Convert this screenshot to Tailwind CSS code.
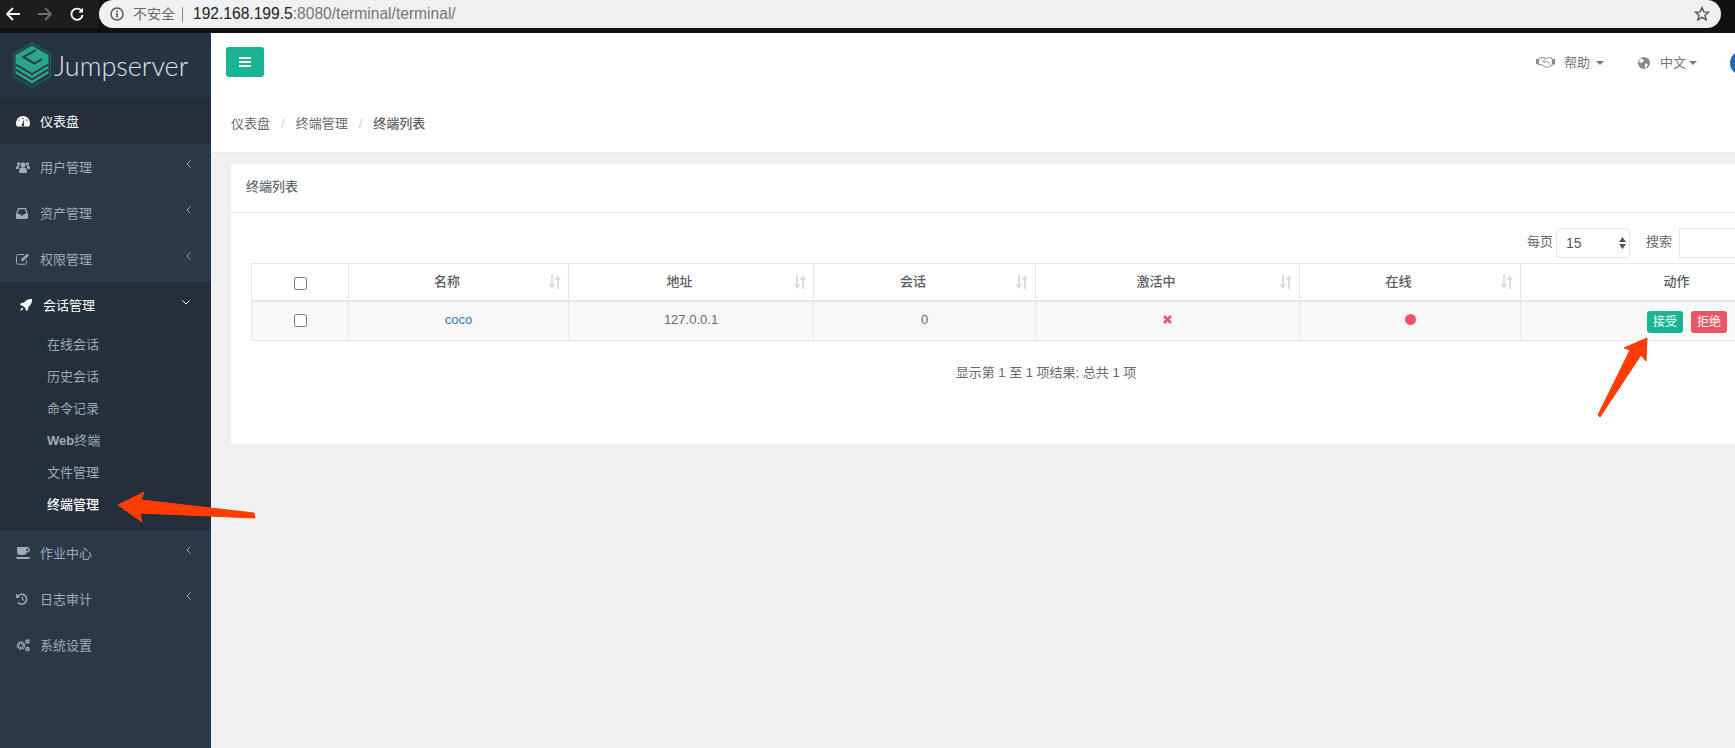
<!DOCTYPE html>
<html>

<head>
    <meta charset="UTF-8">
    <title>Jumpserver</title>
    <script src="https://cdn.jsdelivr.net/npm/@tailwindcss/browser@4"></script>
</head>

<body class="bg-[#f0f0f0] font-['Liberation_Sans','Noto_Sans_CJK_SC',sans-serif] text-[13px] text-[#676a6c]">
    <div class="relative w-[1735px] h-[748px] overflow-hidden flex flex-col">

        <!-- Browser bar -->
        <div class="h-[33px] shrink-0 bg-[#111] flex items-start">
            <div class="w-[99px] h-[28px] shrink-0 bg-[#1d1d1d] flex items-center gap-[18px] pl-[6px]">
                <svg class="w-[14px] h-[14px]" viewBox="0 0 14 14" fill="none" stroke="#fff" stroke-width="1.8"><path d="M14 7H1.500M7 1 1 7l6 6" /></svg>
                <svg class="w-[14px] h-[14px]" viewBox="0 0 14 14" fill="none" stroke="#6e6e6e" stroke-width="1.8"><path d="M0 7h12.500M7 1l6 6-6 6" /></svg>
                <svg class="w-[14px] h-[14px]" viewBox="0 0 14 14" fill="none" stroke="#fff" stroke-width="1.8"><path d="M12 4.500A5.600 5.600 0 1 0 12.600 8" /><path d="M13 .8v4.600H8.400" fill="#fff" stroke="none" /></svg>
            </div>
            <div class="w-[1622px] h-[28px] bg-[#eff0f2] rounded-r-[14px] rounded-l-[14px] flex items-center pl-[11px] pr-[11px]">
                <svg class="w-[14px] h-[14px] shrink-0" viewBox="0 0 14 14" fill="none" stroke="#555"><circle cx="7" cy="7" r="6" stroke-width="1.4" /><path d="M7 6v4.400M7 3.400v1.500" stroke-width="1.6" /></svg>
                <span class="ml-[9px] text-[14px] text-[#6a6a6a]">不安全</span>
                <span class="ml-[7px] w-px h-[15px] bg-[#888]"></span>
                <span class="ml-[10px] text-[15.6px] text-[#222]">192.168.199.5<span class="text-[#777]">:8080/terminal/terminal/</span></span>
                <svg class="ml-auto w-[16px] h-[16px]" viewBox="0 0 16 16" fill="none" stroke="#555" stroke-width="1.4"><path d="m8 1.600 1.900 4.300 4.600.4-3.500 3 1.100 4.600L8 11.400l-4.100 2.500L5 9.300l-3.500-3 4.600-.4z" /></svg>
            </div>
        </div>

        <div class="flex flex-1 min-h-0">

            <!-- Sidebar -->
            <div class="w-[211px] shrink-0 bg-[#2a3848] text-[#a0aaba]">
                <div class="h-[65px] bg-[#253343] flex items-center pl-[13px]">
                    <svg class="w-[39px] h-[46px] shrink-0 -mt-[2px]" viewBox="0 0 39 46" fill="none">
                        <path d="M19 1 37.500 11.500v23L19 45 .8 34.500v-23z" stroke="#1b6a60" stroke-width="1.200" />
                        <path d="M19 3.500 35.500 13v18.500L19 41.500 2.500 31.500V13z" fill="#2aa585" />
                        <path d="M2.500 22.500 19 32l16.500-9.500M2.500 27.500 19 37.500l16.500-10" stroke="#24384a" stroke-width="1.700" />
                        <path d="M23 8 10.500 15 21.500 21.500 29 17" stroke="#24384a" stroke-width="2" />
                    </svg>
                    <span class="ml-[2px] font-['Lato',sans-serif] font-light text-[27px] leading-none text-[#dfe4ea]">Jumpserver</span>
                </div>

                <div class="h-[46px] bg-[#242f3b] flex items-center pl-[16px] text-white">
                    <svg class="w-[14px] h-[12px]" viewBox="0 0 14 12" fill="currentColor"><path fill-rule="evenodd" d="M7 1a7 7 0 0 1 7 7c0 1.300-.3 2.400-.9 3.400H.9A7 7 0 0 1 0 8a7 7 0 0 1 7-7zM7.600 3H6.400v1.200h1.200zM3.500 4.500H2.400v1.200h1.100zm8 0h-1.100v1.200h1.100zM7.500 5.600 6.300 8.700a1.300 1.300 0 1 0 1.300.1l.8-3z" /></svg>
                    <span class="ml-[10px] mt-[1px]">仪表盘</span>
                </div>

                <div class="h-[46px] flex items-center pl-[16px] pr-[20px]">
                    <svg class="w-[14px] h-[12px]" viewBox="0 0 14 12" fill="currentColor"><circle cx="7" cy="3.800" r="2.500" /><circle cx="2.600" cy="3" r="1.700" /><circle cx="11.400" cy="3" r="1.700" /><path d="M3.200 12V9.200c0-2 1.500-2.900 3.800-2.900s3.800.9 3.800 2.900V12zM0 8V6.500C0 5.400.8 5 2.600 5l.8.100A4 4 0 0 0 2.600 8zm14 0V6.500C14 5.400 13.200 5 11.400 5l-.8.100c.5.700.8 1.700.8 2.900z" /></svg>
                    <span class="ml-[10px] mt-[1px]">用户管理</span>
                    <svg class="ml-auto -mt-[6px] w-[5px] h-[8px]" viewBox="0 0 5 8" fill="none" stroke="currentColor"><path d="M4.500.5 1 4l3.500 3.500" /></svg>
                </div>

                <div class="h-[46px] flex items-center pl-[16px] pr-[20px]">
                    <svg class="w-[12px] h-[11px] mr-[2px]" viewBox="0 0 12 11" fill="currentColor"><path fill-rule="evenodd" d="M2 0h8l2 6v3.500c0 .8-.7 1.500-1.500 1.500h-9C.7 11 0 10.300 0 9.500V6zm.9 1.300L1.500 6h2.700l.8 1.600h2L7.800 6h2.700L9.100 1.300z" /></svg>
                    <span class="ml-[10px] mt-[1px]">资产管理</span>
                    <svg class="ml-auto -mt-[6px] w-[5px] h-[8px]" viewBox="0 0 5 8" fill="none" stroke="currentColor"><path d="M4.500.5 1 4l3.500 3.500" /></svg>
                </div>

                <div class="h-[46px] flex items-center pl-[16px] pr-[20px]">
                    <svg class="w-[14px] h-[12px]" viewBox="0 0 14 12" fill="none" stroke="currentColor"><path d="M10.500 7v2.500c0 1-.6 1.800-1.700 1.800H2.300c-1 0-1.800-.8-1.800-1.800V3.300c0-1 .8-1.800 1.800-1.800h6" /><path d="M5 8.300 5.500 6 11.200.7 13 2.500 7.300 7.800z" fill="currentColor" stroke="none" /></svg>
                    <span class="ml-[10px] mt-[1px]">权限管理</span>
                    <svg class="ml-auto -mt-[6px] w-[5px] h-[8px]" viewBox="0 0 5 8" fill="none" stroke="currentColor"><path d="M4.500.5 1 4l3.500 3.500" /></svg>
                </div>

                <!-- Active group -->
                <div class="h-[248px] bg-[#242f3b]">
                    <div class="h-[46px] flex items-center pl-[20px] pr-[21px] text-white">
                        <svg class="w-[12px] h-[12px] mr-[1px]" viewBox="0 0 12 12" fill="currentColor"><path d="M12 0c.2 3.300-1.100 6-3.500 7.800L8 11 6 12l-.4-2.400-3.200-3.200L0 6l1-2 3.200-.5C6 1 8.700-.2 12 0zM1.800 8.500l1.700 1.700L0 12z" /></svg>
                        <span class="ml-[10px] mt-[1px]">会话管理</span>
                        <svg class="ml-auto -mt-[6px] w-[8px] h-[5px]" viewBox="0 0 8 5" fill="none" stroke="currentColor"><path d="M.5.500 4 4 7.500.500" /></svg>
                    </div>
                    <div class="h-[32px] flex items-center pl-[47px] pt-[1px]">在线会话</div>
                    <div class="h-[32px] flex items-center pl-[47px] pt-[1px]">历史会话</div>
                    <div class="h-[32px] flex items-center pl-[47px] pt-[1px]">命令记录</div>
                    <div class="h-[32px] flex items-center pl-[47px] pt-[1px]"><span class="font-bold">Web</span>终端</div>
                    <div class="h-[32px] flex items-center pl-[47px] pt-[1px]">文件管理</div>
                    <div class="h-[32px] flex items-center pl-[47px] pt-[1px] text-white font-medium">终端管理</div>
                </div>

                <div class="h-[46px] flex items-center pl-[16px] pr-[20px]">
                    <svg class="w-[14px] h-[12px]" viewBox="0 0 14 12" fill="currentColor"><path fill-rule="evenodd" d="M1 0h10.200C12.800 0 14 1 14 2.700s-1.200 2.800-2.800 2.800h-.6c-.3 1.500-1.400 2.500-3 2.500H4c-1.700 0-3-1.300-3-3zm9.600 1.500v2.600h.5c.9 0 1.400-.5 1.400-1.300s-.5-1.300-1.400-1.300zM0 10h14c0 1-.8 2-2 2H2c-1.200 0-2-1-2-2z" /></svg>
                    <span class="ml-[10px] mt-[1px]">作业中心</span>
                    <svg class="ml-auto -mt-[6px] w-[5px] h-[8px]" viewBox="0 0 5 8" fill="none" stroke="currentColor"><path d="M4.500.5 1 4l3.500 3.500" /></svg>
                </div>

                <div class="h-[46px] flex items-center pl-[16px] pr-[20px]">
                    <svg class="w-[12px] h-[12px] mr-[1px]" viewBox="0 0 12 12" fill="none" stroke="currentColor" stroke-width="1.500"><path d="M1.800 3A5 5 0 1 1 2 9.500" /><path d="M6.500 3.500v3l2 1" stroke-width="1.200" /><path d="M0 .8 4.300 4.600 0 5z" fill="currentColor" stroke="none" /></svg>
                    <span class="ml-[11px] mt-[1px]">日志审计</span>
                    <svg class="ml-auto -mt-[6px] w-[5px] h-[8px]" viewBox="0 0 5 8" fill="none" stroke="currentColor"><path d="M4.500.5 1 4l3.500 3.500" /></svg>
                </div>

                <div class="h-[46px] flex items-center pl-[16px] pr-[20px]">
                    <svg class="w-[14px] h-[13px]" viewBox="0 0 14 13" fill="none" stroke="currentColor"><circle cx="5" cy="6.500" r="2.900" stroke-width="2.800" stroke-dasharray="1.600 .6" /><circle cx="11.500" cy="2.500" r="1.500" stroke-width="1.500" /><circle cx="11.500" cy="10" r="1.500" stroke-width="1.500" /></svg>
                    <span class="ml-[10px] mt-[1px]">系统设置</span>
                </div>
            </div>

            <!-- Main -->
            <div class="flex-1 min-w-0 overflow-hidden">

                <!-- Navbar -->
                <div class="h-[61px] bg-white border-b border-[#e7eaec] flex items-center pl-[15px] pr-[5px]">
                    <button class="w-[38px] h-[30px] bg-[#1ab394] rounded-[3px] flex items-center justify-center -mt-[2px]">
                        <svg class="w-[12px] h-[10px]" viewBox="0 0 12 10" fill="#fff"><path d="M0 0h12v2H0zM0 4h12v2H0zM0 8h12v2H0z" /></svg>
                    </button>
                    <svg class="ml-auto -mt-[2px] w-[19px] h-[12px]" viewBox="0 0 19 12" fill="none" stroke="#8a8a8a"><path d="M3.500 2 8 1.500l2 1 2.500-1L15.500 2 18 8.500l-3 1-3.500 2-3-1-2-1.500L3 8.500.5 7.500z" /><path d="M9.500 3 7 5.500l2 1L11 5l3 3.500" /><path d="M0 3h3v5H0zM16 3h3v5h-3z" fill="#8a8a8a" stroke="none" /></svg>
                    <span class="ml-[9px] text-[#777]">帮助</span>
                    <span class="ml-[6px] -mt-[1px] w-0 h-0 border-x-[4px] border-x-transparent border-t-[4px] border-t-[#777]"></span>
                    <svg class="ml-[34px] -mt-[1px] w-[12px] h-[12px]" viewBox="0 0 12 12"><circle cx="6" cy="6" r="6" fill="#8a8a8a" /><path d="M3 1.500 6 3 5 5 2 6 1 4zM7 6.500l3 .5-1.500 3.500-1.500.5z" fill="#fff" /></svg>
                    <span class="ml-[10px] text-[#777]">中文</span>
                    <span class="ml-[3px] -mt-[1px] w-0 h-0 border-x-[4px] border-x-transparent border-t-[4px] border-t-[#777]"></span>
                    <span class="ml-[33px] -mt-[1px] w-[24px] h-[24px] shrink-0 rounded-full bg-[#1a6fb5] -mr-[24px]"></span>
                </div>

                <!-- Breadcrumb -->
                <div class="h-[60px] bg-white border-b border-[#e7eaec] flex items-center pl-[20px] -mt-px pt-[2px]">
                    <span>仪表盘</span>
                    <span class="mx-[11px] text-[#ccc]">/</span>
                    <span>终端管理</span>
                    <span class="mx-[11px] text-[#ccc]">/</span>
                    <span class="font-medium text-[#5f6264]">终端列表</span>
                </div>

                <!-- Card -->
                <div class="mt-[11px] ml-[20px] w-[1600px] h-[280px] bg-white">
                    <div class="h-[49px] border-b border-[#e7eaec] flex items-center pl-[15px] pb-[2px] font-medium">终端列表</div>
                    <div class="w-[1509px] ml-[20px] mt-[15px]">
                        <div class="h-[30px] flex items-center justify-end">
                            <span class="-mt-[2px]">每页</span>
                            <div class="ml-[3px] w-[74px] h-[30px] border border-[#e5e6e7] rounded-[4px] flex items-center pl-[9px] pr-[3px] text-[#555] text-[14px]">
                                15
                                <svg class="ml-auto w-[7px] h-[12px]" viewBox="0 0 7 12" fill="#555"><path d="M3.500 0 7 5H0zM0 7h7l-3.500 5z" /></svg>
                            </div>
                            <span class="ml-[16px] -mt-[2px]">搜索</span>
                            <div class="ml-[7px] w-[81px] h-[30px] border border-[#e5e6e7]"></div>
                        </div>
                        <table class="mt-[5px] w-[1581px] max-w-none table-fixed border-collapse">
                            <thead>
                                <tr class="h-[37px] text-[#5a5c5e] font-medium">
                                    <th class="w-[97px] border border-[#e7e7e7] border-b-2 font-medium"><input type="checkbox" class="mt-[1px] align-middle"></th>
                                    <th class="w-[220px] border border-[#e7e7e7] border-b-2 font-medium">
                                        <div class="flex items-center pl-[8px] pr-[7px]"><span class="flex-1 text-center pr-[11px] -mt-[1px]">名称</span><svg class="w-[13px] h-[14px]" viewBox="0 0 13 14" fill="#dcdcdc"><path d="M3 0h2v9h2.500L4 14 .5 9H3zM9 14h2V5h1.800L10 0 6.500 5H9z" /></svg></div>
                                    </th>
                                    <th class="w-[245px] border border-[#e7e7e7] border-b-2 font-medium">
                                        <div class="flex items-center pl-[8px] pr-[7px]"><span class="flex-1 text-center pr-[11px] -mt-[1px]">地址</span><svg class="w-[13px] h-[14px]" viewBox="0 0 13 14" fill="#dcdcdc"><path d="M3 0h2v9h2.500L4 14 .5 9H3zM9 14h2V5h1.800L10 0 6.500 5H9z" /></svg></div>
                                    </th>
                                    <th class="w-[222px] border border-[#e7e7e7] border-b-2 font-medium">
                                        <div class="flex items-center pl-[8px] pr-[7px]"><span class="flex-1 text-center pr-[11px] -mt-[1px]">会话</span><svg class="w-[13px] h-[14px]" viewBox="0 0 13 14" fill="#dcdcdc"><path d="M3 0h2v9h2.500L4 14 .5 9H3zM9 14h2V5h1.800L10 0 6.500 5H9z" /></svg></div>
                                    </th>
                                    <th class="w-[264px] border border-[#e7e7e7] border-b-2 font-medium">
                                        <div class="flex items-center pl-[8px] pr-[7px]"><span class="flex-1 text-center pr-[11px] -mt-[1px]">激活中</span><svg class="w-[13px] h-[14px]" viewBox="0 0 13 14" fill="#dcdcdc"><path d="M3 0h2v9h2.500L4 14 .5 9H3zM9 14h2V5h1.800L10 0 6.500 5H9z" /></svg></div>
                                    </th>
                                    <th class="w-[221px] border border-[#e7e7e7] border-b-2 font-medium">
                                        <div class="flex items-center pl-[8px] pr-[7px]"><span class="flex-1 text-center pr-[11px] -mt-[1px]">在线</span><svg class="w-[13px] h-[14px]" viewBox="0 0 13 14" fill="#dcdcdc"><path d="M3 0h2v9h2.500L4 14 .5 9H3zM9 14h2V5h1.800L10 0 6.500 5H9z" /></svg></div>
                                    </th>
                                    <th class="w-[312px] border border-[#e7e7e7] border-b-2 font-medium"><span class="-mt-[1px]">动作</span></th>
                                </tr>
                            </thead>
                            <tbody>
                                <tr class="h-[40px] bg-[#f8f8f8] text-center">
                                    <td class="border border-[#e7e7e7] pb-[2px]"><input type="checkbox" class="align-middle"></td>
                                    <td class="border border-[#e7e7e7] text-[#337ab7] pb-[3px]">coco</td>
                                    <td class="border border-[#e7e7e7] pb-[3px]">127.0.0.1</td>
                                    <td class="border border-[#e7e7e7] pb-[3px]">0</td>
                                    <td class="border border-[#e7e7e7] pb-[4px]">
                                        <svg class="inline-block w-[9px] h-[9px] align-middle" viewBox="0 0 9 9" fill="none" stroke="#ed5565" stroke-width="2.600"><path d="M1 1l7 7M8 1 1 8" /></svg>
                                    </td>
                                    <td class="border border-[#e7e7e7] pb-[4px]"><span class="inline-block w-[11px] h-[11px] rounded-full bg-[#ed5565] align-middle"></span></td>
                                    <td class="border border-[#e7e7e7]">
                                        <div class="flex gap-[8px] pl-[126px] pt-[2px]">
                                            <span class="w-[36px] h-[22px] rounded-[3px] bg-[#1ab394] text-white text-[12px] flex items-center justify-center">接受</span>
                                            <span class="w-[36px] h-[22px] rounded-[3px] bg-[#ed5565] text-white text-[12px] flex items-center justify-center">拒绝</span>
                                        </div>
                                    </td>
                                </tr>
                            </tbody>
                        </table>
                        <div class="mt-[22px] w-[1590px] text-center">显示第 1 至 1 项结果; 总共 1 项</div>
                    </div>
                </div>
            </div>
        </div>

        <!-- Red arrows drawn over the screenshot -->
        <svg class="absolute inset-0 w-[1735px] h-[748px] pointer-events-none" viewBox="0 0 1735 748" fill="#ff3d00" stroke="#ff3d00" stroke-linejoin="round">
            <path d="M118 505 144 492 141 500 254 513 255 518 140 513 142 522z" />
            <path d="M1647 338 1624 348 1630 350 1598 415 1600 417 1641 355 1646 361z" />
        </svg>
    </div>
</body>

</html>
